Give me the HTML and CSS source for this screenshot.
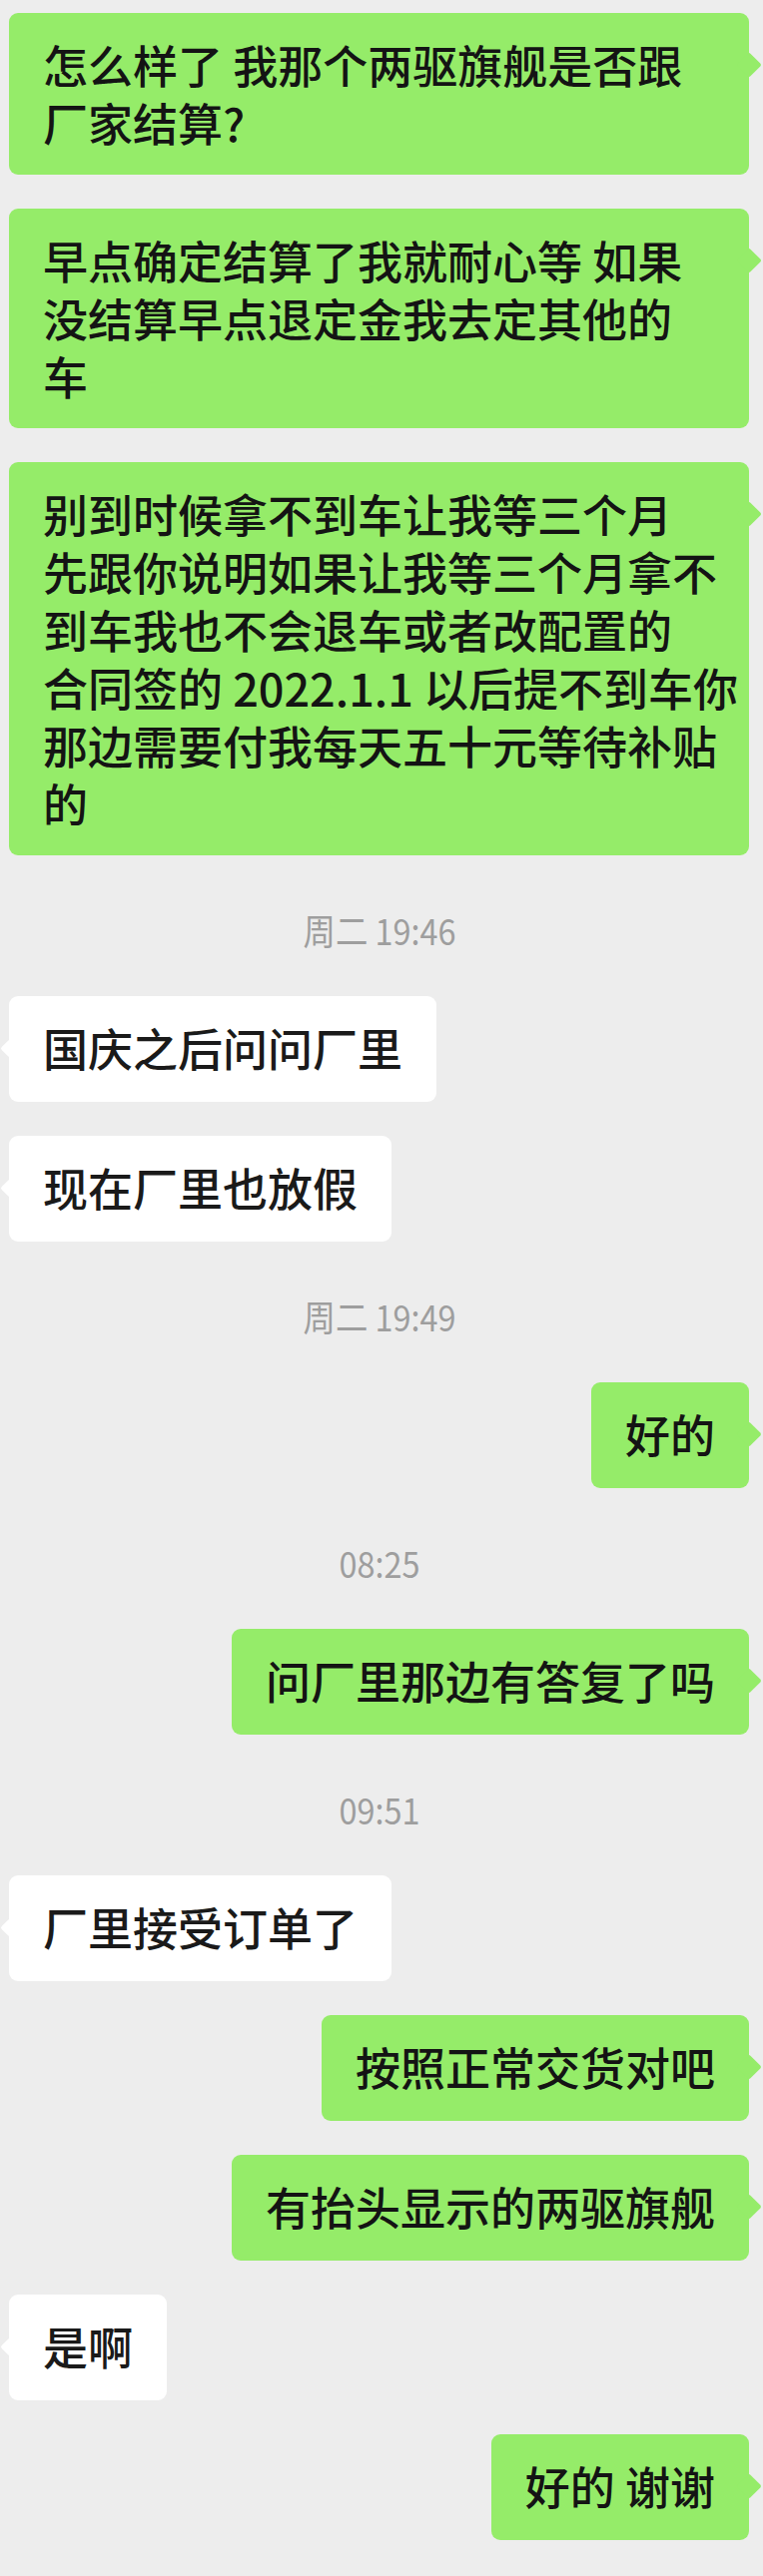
FILE: index.html
```html
<!DOCTYPE html>
<html lang="zh-CN">
<head>
<meta charset="utf-8">
<title>聊天记录</title>
<link rel="stylesheet" href="styles.css">
</head>
<body>
<div class="chat">
  <div class="bubble out wide">
    <div class="line">怎么样了 我那个两驱旗舰是否跟</div>
    <div class="line">厂家结算?</div>
  </div>
  <div class="bubble out wide">
    <div class="line">早点确定结算了我就耐心等 如果</div>
    <div class="line">没结算早点退定金我去定其他的</div>
    <div class="line">车</div>
  </div>
  <div class="bubble out wide">
    <div class="line">别到时候拿不到车让我等三个月</div>
    <div class="line">先跟你说明如果让我等三个月拿不</div>
    <div class="line">到车我也不会退车或者改配置的</div>
    <div class="line">合同签的 2022.1.1 以后提不到车你</div>
    <div class="line">那边需要付我每天五十元等待补贴</div>
    <div class="line">的</div>
  </div>
  <div class="time"><span>周二 19:46</span></div>
  <div class="bubble in"><div class="line">国庆之后问问厂里</div></div>
  <div class="bubble in"><div class="line">现在厂里也放假</div></div>
  <div class="time"><span>周二 19:49</span></div>
  <div class="bubble out"><div class="line">好的</div></div>
  <div class="time"><span>08:25</span></div>
  <div class="bubble out"><div class="line">问厂里那边有答复了吗</div></div>
  <div class="time"><span>09:51</span></div>
  <div class="bubble in"><div class="line">厂里接受订单了</div></div>
  <div class="bubble out"><div class="line">按照正常交货对吧</div></div>
  <div class="bubble out"><div class="line">有抬头显示的两驱旗舰</div></div>
  <div class="bubble in"><div class="line">是啊</div></div>
  <div class="bubble out"><div class="line">好的 谢谢</div></div>
</div>
</body>
</html>
```
FILE: styles.css
```css
* { box-sizing: border-box; }
html, body {
  margin: 0;
  padding: 0;
  background: #ededed;
}
body {
  width: 764px;
  min-height: 2581px;
  font-family: "Noto Sans CJK SC", "Noto Sans", sans-serif;
  overflow: hidden;
}
.chat {
  display: flex;
  flex-direction: column;
  gap: 34px;
  padding: 13px 14px 36px 9px;
}
.bubble {
  position: relative;
  font-size: 45px;
  font-weight: 500;
  color: #141414;
  padding: 23px 34px;
  min-height: 106px;
  border-radius: 9px;
  white-space: nowrap;
  max-width: 741px;
}
.line {
  height: 58px;
  line-height: 58px;
}
.bubble.wide { width: 741px; }
.bubble.out {
  align-self: flex-end;
  background: #95ec69;
}
.bubble.in {
  align-self: flex-start;
  background: #ffffff;
  color: #1a1a1a;
}
.bubble.out::after {
  content: "";
  position: absolute;
  right: -9px;
  top: 43px;
  width: 18px;
  height: 18px;
  background: #95ec69;
  transform: rotate(45deg);
  border-radius: 2px;
}
.bubble.in::before {
  content: "";
  position: absolute;
  left: -6px;
  top: 46px;
  width: 13px;
  height: 13px;
  background: #ffffff;
  transform: rotate(45deg);
  border-radius: 2px;
}
.time {
  padding: 20px 0 13px;
  height: 73px;
  line-height: 40px;
  text-align: center;
  color: #9e9e9e;
  font-size: 36px;
}
.time span {
  display: inline-block;
  transform: scaleX(0.9);
}
```
